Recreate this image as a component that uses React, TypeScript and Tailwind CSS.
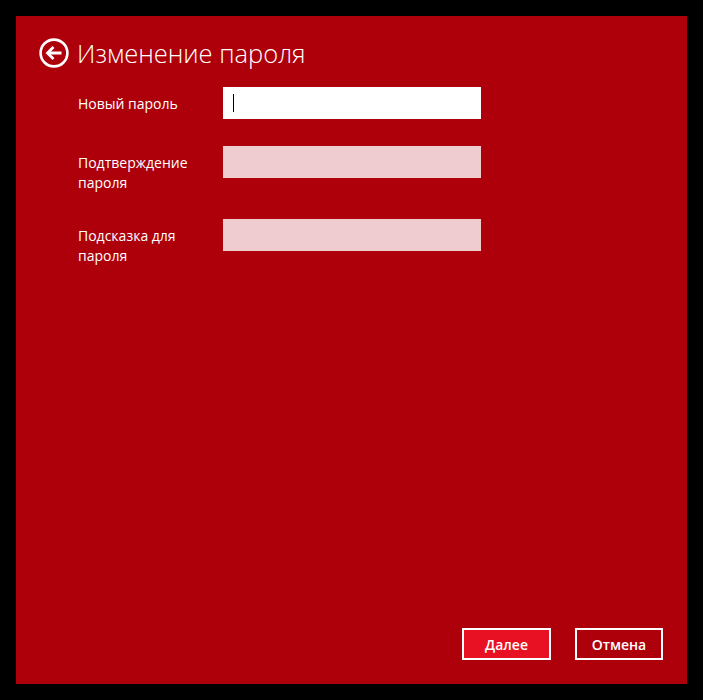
const font = { fontFamily: '"Open Sans", "Noto Sans", sans-serif' };

function BackIcon() {
  return (
    <svg width="30" height="30" viewBox="0 0 30 30" fill="none" className="shrink-0">
      <circle cx="15" cy="15" r="13.4" stroke="white" strokeWidth="2.6" />
      <path d="M22.5 15H10" stroke="white" strokeWidth="3" />
      <path d="M14.5 9L8.5 15L14.5 21" stroke="white" strokeWidth="2.8" />
    </svg>
  );
}

const fields = [
  { label: "Новый пароль", active: true, h: "h-[59px]" },
  { label: "Подтверждение пароля", active: false, h: "h-[73px]" },
  { label: "Подсказка для пароля", active: false, h: "h-auto" },
];

export default function App() {
  return (
    <div className="h-[700px] w-[703px] bg-black p-4 overflow-hidden" style={font}>
      <div className="flex h-[668px] w-[671px] flex-col bg-[#ad000b] text-white">
        {/* Header */}
        <header className="flex h-[71px] items-start pl-[23px] pt-[22px]">
          <BackIcon />
          <h1 className="ml-[8px] -mt-px text-[25.5px] font-light leading-[32px]">Изменение пароля</h1>
        </header>

        {/* Form */}
        <div className="flex flex-col pl-[62px]">
          {fields.map((f) => (
            <div key={f.label} className={`flex items-start ${f.h}`}>
              <label className="w-[145px] pr-6 pt-[7px] text-[14px] leading-[20px]">{f.label}</label>
              {f.active ? (
                <div className="flex h-8 w-[258px] items-center bg-white pl-[10px]">
                  <div className="h-[18px] w-px bg-black" />
                </div>
              ) : (
                <div className="h-8 w-[258px] bg-[#efcccf]" />
              )}
            </div>
          ))}
        </div>

        {/* Footer buttons */}
        <div className="mt-auto flex justify-end gap-6 pb-6 pr-6">
          <button className="h-8 w-[89px] border-2 border-white bg-[#e81123] text-[14px] font-semibold">Далее</button>
          <button className="h-8 w-[88px] border-2 border-white bg-[#ad000b] text-[14px] font-semibold">Отмена</button>
        </div>
      </div>
    </div>
  );
}
